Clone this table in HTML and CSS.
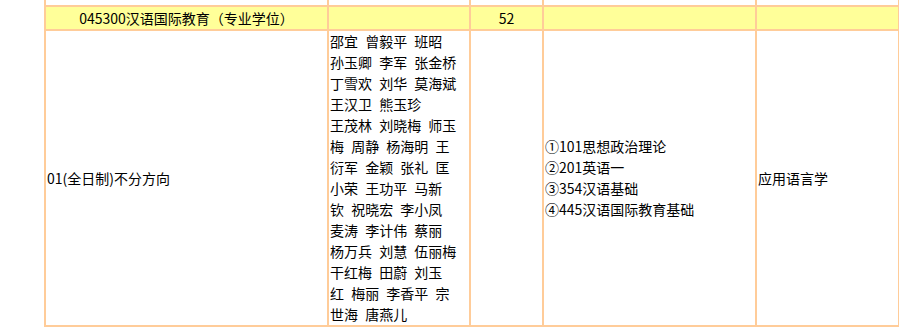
FILE: index.html
```html
<!DOCTYPE html>
<html lang="zh-CN">
<head>
<meta charset="utf-8">
<title>招生目录</title>
<link rel="stylesheet" href="styles.css">
</head>
<body>
<table class="plan">
  <colgroup>
    <col class="c1"><col class="c2"><col class="c3"><col class="c4"><col class="c5">
  </colgroup>
  <tr class="prev">
    <td></td><td></td><td></td><td></td><td></td>
  </tr>
  <tr class="major">
    <td class="center">045300汉语国际教育（专业学位）</td>
    <td></td>
    <td class="center">52</td>
    <td></td>
    <td></td>
  </tr>
  <tr class="dir">
    <td>01(全日制)不分方向</td>
    <td class="names">邵宜 曾毅平 班昭<br>孙玉卿 李军 张金桥<br>丁雪欢 刘华 莫海斌<br>王汉卫 熊玉珍<br>王茂林 刘晓梅 师玉<br>梅 周静 杨海明 王<br>衍军 金颖 张礼 匡<br>小荣 王功平 马新<br>钦 祝晓宏 李小凤<br>麦涛 李计伟 蔡丽<br>杨万兵 刘慧 伍丽梅<br>干红梅 田蔚 刘玉<br>红 梅丽 李香平 宗<br>世海 唐燕儿</td>
    <td></td>
    <td>①101思想政治理论<br>②201英语一<br>③354汉语基础<br>④445汉语国际教育基础</td>
    <td>应用语言学</td>
  </tr>
</table>
</body>
</html>
```

FILE: styles.css
```css
html {
  overflow: hidden;
  background: #ffffff;
}

body {
  margin: 0;
  font-family: "Noto Sans CJK SC", "Noto Sans", sans-serif;
  font-size: 14px;
  line-height: 21px;
  color: #000000;
}

.plan {
  margin: -2px 0 0 44px;
  table-layout: fixed;
  width: 856px;
  border-collapse: separate;
  border-spacing: 2px;
  background: #ffcc99;
}

.c1 { width: 281px; }
.c2 { width: 140px; }
.c3 { width: 71px; }
.c4 { width: 211px; }
.c5 { width: 141px; }

.plan td {
  padding: 0 1px;
  background: #ffffff;
  vertical-align: middle;
  white-space: nowrap;
  overflow: hidden;
  word-spacing: 4px;
}

.prev td {
  height: 5px;
  padding: 0;
  line-height: 5px;
}

.major td {
  height: 22px;
  line-height: 22px;
  background: #ffff99;
}

.center {
  text-align: center;
}

.dir .names {
  vertical-align: top;
}
```
